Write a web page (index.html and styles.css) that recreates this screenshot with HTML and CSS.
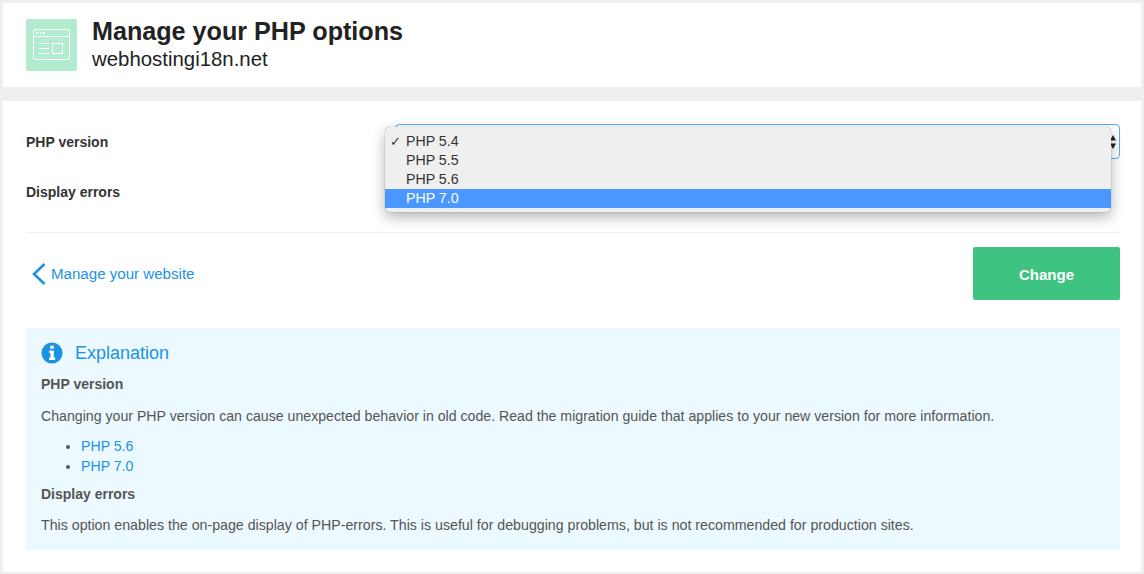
FILE: index.html
```html
<!DOCTYPE html>
<html lang="en">
<head>
    <meta charset="UTF-8">
    <title>Manage your PHP options</title>
    <link rel="stylesheet" href="styles.css">
</head>
<body>

<div class="header card">
    <div class="header-icon">
        <svg width="37" height="32" viewBox="0 0 37 32" fill="none" stroke="#fff" stroke-width="1">
            <rect x="0.5" y="0.5" width="36" height="30" rx="2"/>
            <path d="M0.5 7.5H36.5"/>
            <circle cx="4" cy="4" r="1.1" fill="#fff" stroke="none"/>
            <circle cx="7.5" cy="4" r="1.1" fill="#fff" stroke="none"/>
            <circle cx="11" cy="4" r="1.1" fill="#fff" stroke="none"/>
            <path d="M6 14.5H16M6 19.5H16M6 24.5H16"/>
            <rect x="19.5" y="14.5" width="10" height="10"/>
        </svg>
    </div>
    <div>
        <h1>Manage your PHP options</h1>
        <div class="domain">webhostingi18n.net</div>
    </div>
</div>

<div class="main card">
    <form class="options">
        <label class="option-label">PHP version</label>
        <div class="select-wrap">
            <div class="select select-focus">
                <svg class="select-arrows" width="6" height="14" viewBox="0 0 6 14"><path d="M3 0L6 5.5H0ZM3 14L0 8.5H6Z" fill="#222"/></svg>
            </div>
            <ul class="popup">
                <li><span class="check">✓</span>PHP 5.4</li>
                <li>PHP 5.5</li>
                <li>PHP 5.6</li>
                <li class="active">PHP 7.0</li>
            </ul>
        </div>
        <label class="option-label">Display errors</label>
        <div class="toggle"></div>
    </form>

    <div class="actions">
        <a class="back" href="#">
            <svg width="14" height="22" viewBox="0 0 14 22" fill="none" stroke="#1b93e4" stroke-width="2.6"><path d="M12.5 1L2 11L12.5 21"/></svg>
            Manage your website
        </a>
        <button class="btn-change" type="button">Change</button>
    </div>

    <div class="explanation">
        <h2>
            <svg width="22" height="22" viewBox="0 0 22 22"><circle cx="11" cy="11" r="10.5" fill="#1b93e4"/><path d="M9.2 3.8h3.6v3H9.2ZM8.2 8.6h4.6v7h1.4v2.4H8.2v-2.4h1.3v-4.6H8.2Z" fill="#fff"/></svg>
            Explanation
        </h2>
        <h3>PHP version</h3>
        <p>Changing your PHP version can cause unexpected behavior in old code. Read the migration guide that applies to your new version for more information.</p>
        <ul class="links">
            <li><a href="#">PHP 5.6</a></li>
            <li><a href="#">PHP 7.0</a></li>
        </ul>
        <h3 class="errors-title">Display errors</h3>
        <p class="errors-text">This option enables the on-page display of PHP-errors. This is useful for debugging problems, but is not recommended for production sites.</p>
    </div>
</div>

</body>
</html>
```

FILE: styles.css
```css
body {
    font-family: "Liberation Sans", Arial, sans-serif;
    background-color: #efefef;
    margin: 0;
    padding: 3px 3px 2px;
    color: #555;
    font-size: 14px;
}
.card {
    background-color: #fff;
}
.header {
    height: 84px;
    display: flex;
    align-items: center;
    gap: 15px;
    padding: 0 23px;
    box-sizing: border-box;
    margin-bottom: 14px;
}
.header-icon {
    width: 51px;
    height: 52px;
    background-color: #b1ecd0;
    border-radius: 2px;
    display: flex;
    align-items: center;
    justify-content: center;
}
h1 {
    font-size: 25.15px;
    line-height: 26px;
    color: #222;
    margin: 0 0 2px;
}
.domain {
    font-size: 20.4px;
    line-height: 26px;
    color: #222;
}
.main {
    padding: 23px 21px 23px 23px;
    height: 471px;
    box-sizing: border-box;
}
.options {
    display: grid;
    grid-template-columns: 369px 1fr;
    grid-auto-rows: 35px;
    row-gap: 15px;
    align-items: center;
    padding-bottom: 23px;
    border-bottom: 1px solid #eee;
}
.option-label {
    font-weight: bold;
    color: #333;
}
.select-wrap {
    position: relative;
    z-index: 2;
}
.select {
    height: 35px;
    box-sizing: border-box;
    border: 1px solid #5aace8;
    border-radius: 4px;
    background-color: #fff;
    position: relative;
}
.select-arrows {
    position: absolute;
    right: 3px;
    top: 10px;
}
.toggle {
    width: 14px;
    height: 14px;
}
.popup {
    position: absolute;
    left: -10px;
    top: 3px;
    width: 726px;
    height: 85px;
    box-sizing: border-box;
    margin: 0;
    padding: 5px 0 0;
    list-style: none;
    background-color: #efefef;
    border-radius: 5px;
    box-shadow: 0 0 1px rgba(0,0,0,0.5), 0 5px 14px rgba(0,0,0,0.3);
    color: #333;
    font-size: 14.2px;
}
.popup li {
    height: 19px;
    line-height: 19px;
    padding-left: 21px;
    position: relative;
}
.popup .active {
    background-color: #4a98ff;
    color: #fff;
}
.check {
    position: absolute;
    left: 5px;
    font-size: 13px;
    font-weight: bold;
    font-family: "DejaVu Sans", sans-serif;
}
.actions {
    display: flex;
    justify-content: space-between;
    align-items: center;
    padding: 14px 0 28px;
}
.back {
    display: flex;
    align-items: center;
    gap: 5px;
    padding-left: 6px;
    color: #1b93e4;
    font-size: 15.1px;
    text-decoration: none;
}
.btn-change {
    width: 147px;
    height: 53px;
    padding-top: 3px;
    background-color: #3fc380;
    border: none;
    border-radius: 2px;
    color: #fff;
    font-family: inherit;
    font-size: 15px;
    font-weight: bold;
}
.explanation {
    background-color: #ecf9ff;
    padding: 14px 15px 16px;
    height: 222px;
    box-sizing: border-box;
    font-size: 14.15px;
}
.explanation h2 {
    display: flex;
    align-items: center;
    gap: 12px;
    margin: 0 0 10px;
    font-size: 18px;
    font-weight: normal;
    line-height: 22px;
    color: #1b93e4;
}
.explanation h3 {
    font-size: 14px;
    line-height: 20px;
    margin: 0 0 12px;
}
.explanation p {
    line-height: 20px;
    margin: 0 0 10px;
}
.links {
    margin: 0 0 8px;
    padding-left: 40px;
    line-height: 20px;
}
.links a {
    color: #1b93e4;
    text-decoration: none;
}
.explanation .errors-title {
    margin-bottom: 11px;
}
.explanation .errors-text {
    font-size: 14.2px;
}
```
